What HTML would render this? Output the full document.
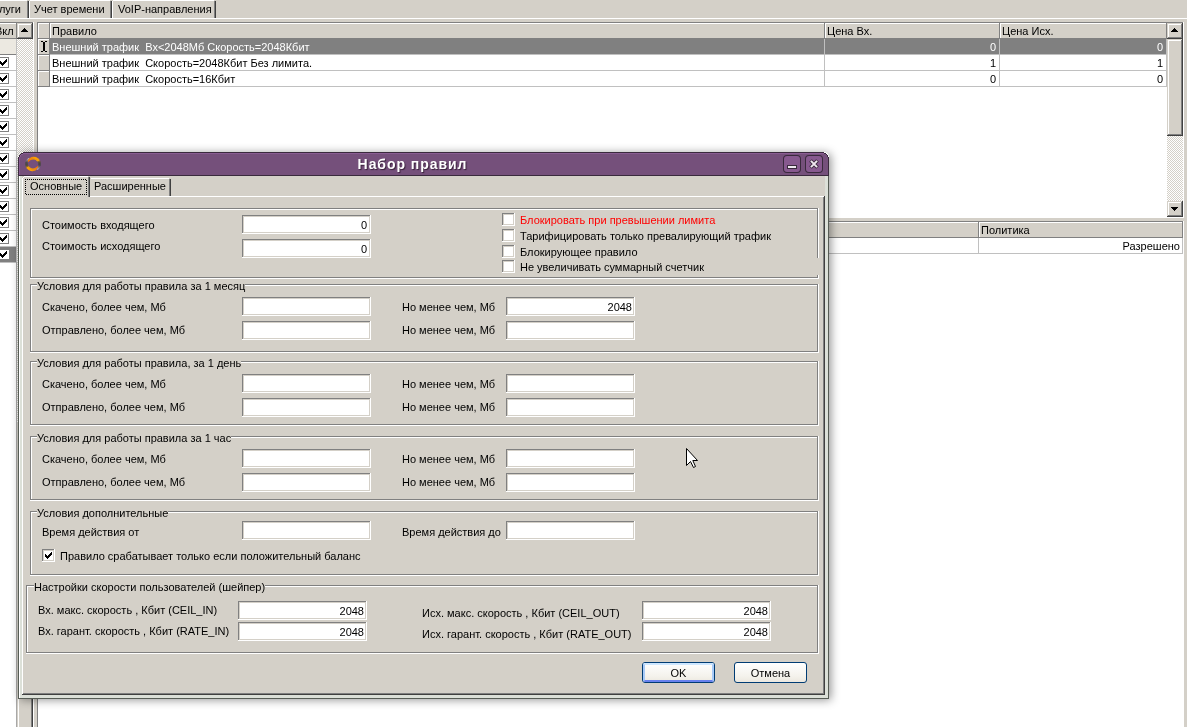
<!DOCTYPE html>
<html><head><meta charset="utf-8"><style>
html,body{margin:0;padding:0;width:1187px;height:727px;overflow:hidden;background:#fff;position:relative}
i{position:absolute;display:block}
s{position:absolute;display:block;font:11px/13px "Liberation Sans",sans-serif;white-space:nowrap;text-decoration:none;color:#000;will-change:transform}
svg{display:block}
</style></head><body>
<i style="left:0px;top:0px;width:1187px;height:22px;background:#d4d0c8;"></i><i style="left:0px;top:18px;width:1187px;height:1px;background:#ffffff;"></i><i style="left:0px;top:0px;width:27px;height:1px;background:#ffffff;"></i><i style="left:27px;top:1px;width:1px;height:17px;background:#808080;"></i><i style="left:28px;top:1px;width:1px;height:17px;background:#404040;"></i><s style="left:-279px;top:3px;width:300px;text-align:right;">Услуги</s><i style="left:30px;top:0px;width:80px;height:1px;background:#ffffff;"></i><i style="left:29px;top:1px;width:1px;height:17px;background:#ffffff;"></i><i style="left:110px;top:1px;width:1px;height:17px;background:#808080;"></i><i style="left:111px;top:1px;width:1px;height:17px;background:#404040;"></i><s style="left:34px;top:3px;">Учет времени</s><i style="left:113px;top:0px;width:101px;height:1px;background:#ffffff;"></i><i style="left:112px;top:1px;width:1px;height:17px;background:#ffffff;"></i><i style="left:214px;top:1px;width:1px;height:17px;background:#808080;"></i><i style="left:215px;top:1px;width:1px;height:17px;background:#404040;"></i><s style="left:118px;top:3px;">VoIP-направления</s><i style="left:1184px;top:22px;width:3px;height:705px;background:#d4d0c8;"></i><i style="left:0px;top:22px;width:37px;height:705px;background:#ffffff;"></i><i style="left:0px;top:22px;width:33px;height:1px;background:#808080;"></i><i style="left:0px;top:23px;width:16px;height:15px;background:#d4d0c8;"></i><i style="left:0px;top:23px;width:16px;height:1px;background:#ffffff;"></i><s style="left:-5px;top:25px;">Вкл</s><i style="left:16px;top:23px;width:1px;height:16px;background:#808080;"></i><i style="left:0px;top:38px;width:16px;height:1px;background:#808080;"></i><i style="left:0px;top:39px;width:16px;height:15px;background:#ece9e1;"></i><i style="left:0px;top:54px;width:16px;height:1px;background:#808080;"></i><i style="left:16px;top:39px;width:1px;height:16px;background:#808080;"></i><i style="left:-2px;top:57px;width:11px;height:1px;background:#808080;"></i><i style="left:-2px;top:67px;width:11px;height:1px;background:#808080;"></i><i style="left:8px;top:57px;width:1px;height:11px;background:#808080;"></i><svg style="position:absolute;left:0px;top:59px" width="7" height="7"><path d="M6 0h1v1h-1zM5 1h2v1h-2zM0 2h1v1h-1zM4 2h3v1h-3zM0 3h2v1h-2zM3 3h3v1h-3zM0 4h5v1h-5zM1 5h3v1h-3zM2 6h1v1h-1z" fill="#000"/></svg><i style="left:0px;top:70px;width:16px;height:1px;background:#c0c0c0;"></i><i style="left:-2px;top:73px;width:11px;height:1px;background:#808080;"></i><i style="left:-2px;top:83px;width:11px;height:1px;background:#808080;"></i><i style="left:8px;top:73px;width:1px;height:11px;background:#808080;"></i><svg style="position:absolute;left:0px;top:75px" width="7" height="7"><path d="M6 0h1v1h-1zM5 1h2v1h-2zM0 2h1v1h-1zM4 2h3v1h-3zM0 3h2v1h-2zM3 3h3v1h-3zM0 4h5v1h-5zM1 5h3v1h-3zM2 6h1v1h-1z" fill="#000"/></svg><i style="left:0px;top:86px;width:16px;height:1px;background:#c0c0c0;"></i><i style="left:-2px;top:89px;width:11px;height:1px;background:#808080;"></i><i style="left:-2px;top:99px;width:11px;height:1px;background:#808080;"></i><i style="left:8px;top:89px;width:1px;height:11px;background:#808080;"></i><svg style="position:absolute;left:0px;top:91px" width="7" height="7"><path d="M6 0h1v1h-1zM5 1h2v1h-2zM0 2h1v1h-1zM4 2h3v1h-3zM0 3h2v1h-2zM3 3h3v1h-3zM0 4h5v1h-5zM1 5h3v1h-3zM2 6h1v1h-1z" fill="#000"/></svg><i style="left:0px;top:102px;width:16px;height:1px;background:#c0c0c0;"></i><i style="left:-2px;top:105px;width:11px;height:1px;background:#808080;"></i><i style="left:-2px;top:115px;width:11px;height:1px;background:#808080;"></i><i style="left:8px;top:105px;width:1px;height:11px;background:#808080;"></i><svg style="position:absolute;left:0px;top:107px" width="7" height="7"><path d="M6 0h1v1h-1zM5 1h2v1h-2zM0 2h1v1h-1zM4 2h3v1h-3zM0 3h2v1h-2zM3 3h3v1h-3zM0 4h5v1h-5zM1 5h3v1h-3zM2 6h1v1h-1z" fill="#000"/></svg><i style="left:0px;top:118px;width:16px;height:1px;background:#c0c0c0;"></i><i style="left:-2px;top:121px;width:11px;height:1px;background:#808080;"></i><i style="left:-2px;top:131px;width:11px;height:1px;background:#808080;"></i><i style="left:8px;top:121px;width:1px;height:11px;background:#808080;"></i><svg style="position:absolute;left:0px;top:123px" width="7" height="7"><path d="M6 0h1v1h-1zM5 1h2v1h-2zM0 2h1v1h-1zM4 2h3v1h-3zM0 3h2v1h-2zM3 3h3v1h-3zM0 4h5v1h-5zM1 5h3v1h-3zM2 6h1v1h-1z" fill="#000"/></svg><i style="left:0px;top:134px;width:16px;height:1px;background:#c0c0c0;"></i><i style="left:-2px;top:137px;width:11px;height:1px;background:#808080;"></i><i style="left:-2px;top:147px;width:11px;height:1px;background:#808080;"></i><i style="left:8px;top:137px;width:1px;height:11px;background:#808080;"></i><svg style="position:absolute;left:0px;top:139px" width="7" height="7"><path d="M6 0h1v1h-1zM5 1h2v1h-2zM0 2h1v1h-1zM4 2h3v1h-3zM0 3h2v1h-2zM3 3h3v1h-3zM0 4h5v1h-5zM1 5h3v1h-3zM2 6h1v1h-1z" fill="#000"/></svg><i style="left:0px;top:150px;width:16px;height:1px;background:#c0c0c0;"></i><i style="left:-2px;top:153px;width:11px;height:1px;background:#808080;"></i><i style="left:-2px;top:163px;width:11px;height:1px;background:#808080;"></i><i style="left:8px;top:153px;width:1px;height:11px;background:#808080;"></i><svg style="position:absolute;left:0px;top:155px" width="7" height="7"><path d="M6 0h1v1h-1zM5 1h2v1h-2zM0 2h1v1h-1zM4 2h3v1h-3zM0 3h2v1h-2zM3 3h3v1h-3zM0 4h5v1h-5zM1 5h3v1h-3zM2 6h1v1h-1z" fill="#000"/></svg><i style="left:0px;top:166px;width:16px;height:1px;background:#c0c0c0;"></i><i style="left:-2px;top:169px;width:11px;height:1px;background:#808080;"></i><i style="left:-2px;top:179px;width:11px;height:1px;background:#808080;"></i><i style="left:8px;top:169px;width:1px;height:11px;background:#808080;"></i><svg style="position:absolute;left:0px;top:171px" width="7" height="7"><path d="M6 0h1v1h-1zM5 1h2v1h-2zM0 2h1v1h-1zM4 2h3v1h-3zM0 3h2v1h-2zM3 3h3v1h-3zM0 4h5v1h-5zM1 5h3v1h-3zM2 6h1v1h-1z" fill="#000"/></svg><i style="left:0px;top:182px;width:16px;height:1px;background:#c0c0c0;"></i><i style="left:-2px;top:185px;width:11px;height:1px;background:#808080;"></i><i style="left:-2px;top:195px;width:11px;height:1px;background:#808080;"></i><i style="left:8px;top:185px;width:1px;height:11px;background:#808080;"></i><svg style="position:absolute;left:0px;top:187px" width="7" height="7"><path d="M6 0h1v1h-1zM5 1h2v1h-2zM0 2h1v1h-1zM4 2h3v1h-3zM0 3h2v1h-2zM3 3h3v1h-3zM0 4h5v1h-5zM1 5h3v1h-3zM2 6h1v1h-1z" fill="#000"/></svg><i style="left:0px;top:198px;width:16px;height:1px;background:#c0c0c0;"></i><i style="left:-2px;top:201px;width:11px;height:1px;background:#808080;"></i><i style="left:-2px;top:211px;width:11px;height:1px;background:#808080;"></i><i style="left:8px;top:201px;width:1px;height:11px;background:#808080;"></i><svg style="position:absolute;left:0px;top:203px" width="7" height="7"><path d="M6 0h1v1h-1zM5 1h2v1h-2zM0 2h1v1h-1zM4 2h3v1h-3zM0 3h2v1h-2zM3 3h3v1h-3zM0 4h5v1h-5zM1 5h3v1h-3zM2 6h1v1h-1z" fill="#000"/></svg><i style="left:0px;top:214px;width:16px;height:1px;background:#c0c0c0;"></i><i style="left:-2px;top:217px;width:11px;height:1px;background:#808080;"></i><i style="left:-2px;top:227px;width:11px;height:1px;background:#808080;"></i><i style="left:8px;top:217px;width:1px;height:11px;background:#808080;"></i><svg style="position:absolute;left:0px;top:219px" width="7" height="7"><path d="M6 0h1v1h-1zM5 1h2v1h-2zM0 2h1v1h-1zM4 2h3v1h-3zM0 3h2v1h-2zM3 3h3v1h-3zM0 4h5v1h-5zM1 5h3v1h-3zM2 6h1v1h-1z" fill="#000"/></svg><i style="left:0px;top:230px;width:16px;height:1px;background:#c0c0c0;"></i><i style="left:-2px;top:233px;width:11px;height:1px;background:#808080;"></i><i style="left:-2px;top:243px;width:11px;height:1px;background:#808080;"></i><i style="left:8px;top:233px;width:1px;height:11px;background:#808080;"></i><svg style="position:absolute;left:0px;top:235px" width="7" height="7"><path d="M6 0h1v1h-1zM5 1h2v1h-2zM0 2h1v1h-1zM4 2h3v1h-3zM0 3h2v1h-2zM3 3h3v1h-3zM0 4h5v1h-5zM1 5h3v1h-3zM2 6h1v1h-1z" fill="#000"/></svg><i style="left:0px;top:246px;width:16px;height:1px;background:#c0c0c0;"></i><i style="left:0px;top:247px;width:16px;height:15px;background:#808080;"></i><i style="left:-1px;top:250px;width:10px;height:9px;background:#ffffff;"></i><svg style="position:absolute;left:0px;top:251px" width="7" height="7"><path d="M6 0h1v1h-1zM5 1h2v1h-2zM0 2h1v1h-1zM4 2h3v1h-3zM0 3h2v1h-2zM3 3h3v1h-3zM0 4h5v1h-5zM1 5h3v1h-3zM2 6h1v1h-1z" fill="#000"/></svg><i style="left:0px;top:262px;width:16px;height:1px;background:#c0c0c0;"></i><i style="left:16px;top:39px;width:1px;height:223px;background:#c0c0c0;"></i><i style="left:17px;top:23px;width:16px;height:16px;background:#d4d0c8;"></i><i style="left:17px;top:23px;width:16px;height:1px;background:#d4d0c8;"></i><i style="left:17px;top:23px;width:1px;height:16px;background:#d4d0c8;"></i><i style="left:17px;top:38px;width:16px;height:1px;background:#404040;"></i><i style="left:32px;top:23px;width:1px;height:16px;background:#404040;"></i><i style="left:18px;top:24px;width:14px;height:1px;background:#ffffff;"></i><i style="left:18px;top:24px;width:1px;height:14px;background:#ffffff;"></i><i style="left:18px;top:37px;width:14px;height:1px;background:#808080;"></i><i style="left:31px;top:24px;width:1px;height:14px;background:#808080;"></i><svg style="position:absolute;left:21px;top:28px" width="7" height="4"><path d="M3 0h1v1h1v1h1v1h1v1h-7v-1h1v-1h1v-1h1z" fill="#000"/></svg><i style="left:17px;top:39px;width:16px;height:384px;background-color:#fff;background-image:repeating-conic-gradient(#d4d0c8 0 25%,#fff 0 50%);background-size:2px 2px"></i><i style="left:17px;top:423px;width:16px;height:275px;background:#d4d0c8;"></i><i style="left:16px;top:262px;width:1px;height:436px;background:#a8a8a8;"></i><i style="left:33px;top:22px;width:1px;height:705px;background:#ffffff;"></i><i style="left:34px;top:22px;width:3px;height:705px;background:#d4d0c8;"></i><i style="left:16px;top:698px;width:17px;height:29px;background:#d4d0c8;"></i><i style="left:16px;top:698px;width:1px;height:29px;background:#a8a8a8;"></i><i style="left:17px;top:698px;width:1px;height:29px;background:#d4d0c8;"></i><i style="left:18px;top:698px;width:1px;height:29px;background:#ffffff;"></i><i style="left:32px;top:698px;width:1px;height:29px;background:#404040;"></i><i style="left:31px;top:698px;width:1px;height:29px;background:#808080;"></i><i style="left:37px;top:22px;width:1147px;height:196px;background:#ffffff;"></i><i style="left:37px;top:22px;width:1146px;height:1px;background:#808080;"></i><i style="left:37px;top:22px;width:1px;height:196px;background:#808080;"></i><i style="left:1183px;top:22px;width:1px;height:196px;background:#ffffff;"></i><i style="left:37px;top:217px;width:1147px;height:1px;background:#ffffff;"></i><i style="left:38px;top:23px;width:11px;height:15px;background:#d4d0c8;"></i><i style="left:38px;top:23px;width:11px;height:1px;background:#ffffff;"></i><i style="left:38px;top:23px;width:1px;height:15px;background:#ffffff;"></i><i style="left:49px;top:23px;width:1px;height:16px;background:#808080;"></i><i style="left:38px;top:38px;width:11px;height:1px;background:#808080;"></i><i style="left:38px;top:39px;width:11px;height:15px;background:#d4d0c8;"></i><i style="left:38px;top:39px;width:11px;height:1px;background:#ffffff;"></i><i style="left:38px;top:39px;width:1px;height:15px;background:#ffffff;"></i><i style="left:49px;top:39px;width:1px;height:16px;background:#808080;"></i><i style="left:38px;top:54px;width:12px;height:1px;background:#808080;"></i><i style="left:38px;top:55px;width:11px;height:15px;background:#d4d0c8;"></i><i style="left:38px;top:55px;width:11px;height:1px;background:#ffffff;"></i><i style="left:38px;top:55px;width:1px;height:15px;background:#ffffff;"></i><i style="left:49px;top:55px;width:1px;height:16px;background:#808080;"></i><i style="left:38px;top:70px;width:12px;height:1px;background:#808080;"></i><i style="left:38px;top:71px;width:11px;height:15px;background:#d4d0c8;"></i><i style="left:38px;top:71px;width:11px;height:1px;background:#ffffff;"></i><i style="left:38px;top:71px;width:1px;height:15px;background:#ffffff;"></i><i style="left:49px;top:71px;width:1px;height:16px;background:#808080;"></i><i style="left:38px;top:86px;width:12px;height:1px;background:#808080;"></i><i style="left:41px;top:41px;width:2px;height:1px;background:#000;"></i><i style="left:45px;top:41px;width:2px;height:1px;background:#000;"></i><i style="left:43px;top:42px;width:2px;height:9px;background:#000;"></i><i style="left:41px;top:51px;width:2px;height:1px;background:#000;"></i><i style="left:45px;top:51px;width:2px;height:1px;background:#000;"></i><i style="left:50px;top:23px;width:774px;height:15px;background:#d4d0c8;"></i><i style="left:50px;top:23px;width:774px;height:1px;background:#ffffff;"></i><i style="left:50px;top:23px;width:1px;height:15px;background:#ffffff;"></i><i style="left:824px;top:23px;width:1px;height:16px;background:#808080;"></i><s style="left:52px;top:25px;">Правило</s><i style="left:825px;top:23px;width:174px;height:15px;background:#d4d0c8;"></i><i style="left:825px;top:23px;width:174px;height:1px;background:#ffffff;"></i><i style="left:825px;top:23px;width:1px;height:15px;background:#ffffff;"></i><i style="left:999px;top:23px;width:1px;height:16px;background:#808080;"></i><s style="left:827px;top:25px;">Цена Вх.</s><i style="left:1000px;top:23px;width:166px;height:15px;background:#d4d0c8;"></i><i style="left:1000px;top:23px;width:166px;height:1px;background:#ffffff;"></i><i style="left:1000px;top:23px;width:1px;height:15px;background:#ffffff;"></i><i style="left:1166px;top:23px;width:1px;height:16px;background:#808080;"></i><s style="left:1002px;top:25px;">Цена Исх.</s><i style="left:50px;top:38px;width:1117px;height:1px;background:#808080;"></i><i style="left:50px;top:38px;width:1116px;height:16px;background:#808080;"></i><i style="left:50px;top:54px;width:1117px;height:1px;background:#c0c0c0;"></i><i style="left:824px;top:39px;width:1px;height:16px;background:#c0c0c0;"></i><i style="left:999px;top:39px;width:1px;height:16px;background:#c0c0c0;"></i><i style="left:1166px;top:39px;width:1px;height:16px;background:#c0c0c0;"></i><s style="left:52px;top:41px;color:#ffffff;">Внешний трафик&nbsp; Вх&lt;2048Мб Скорость=2048Кбит</s><s style="left:696px;top:41px;width:300px;text-align:right;color:#ffffff;">0</s><s style="left:863px;top:41px;width:300px;text-align:right;color:#ffffff;">0</s><i style="left:50px;top:70px;width:1117px;height:1px;background:#c0c0c0;"></i><i style="left:824px;top:55px;width:1px;height:16px;background:#c0c0c0;"></i><i style="left:999px;top:55px;width:1px;height:16px;background:#c0c0c0;"></i><i style="left:1166px;top:55px;width:1px;height:16px;background:#c0c0c0;"></i><s style="left:52px;top:57px;">Внешний трафик&nbsp; Скорость=2048Кбит Без лимита.</s><s style="left:696px;top:57px;width:300px;text-align:right;">1</s><s style="left:863px;top:57px;width:300px;text-align:right;">1</s><i style="left:50px;top:86px;width:1117px;height:1px;background:#c0c0c0;"></i><i style="left:824px;top:71px;width:1px;height:16px;background:#c0c0c0;"></i><i style="left:999px;top:71px;width:1px;height:16px;background:#c0c0c0;"></i><i style="left:1166px;top:71px;width:1px;height:16px;background:#c0c0c0;"></i><s style="left:52px;top:73px;">Внешний трафик&nbsp; Скорость=16Кбит</s><s style="left:696px;top:73px;width:300px;text-align:right;">0</s><s style="left:863px;top:73px;width:300px;text-align:right;">0</s><i style="left:1167px;top:23px;width:16px;height:16px;background:#d4d0c8;"></i><i style="left:1167px;top:23px;width:16px;height:1px;background:#d4d0c8;"></i><i style="left:1167px;top:23px;width:1px;height:16px;background:#d4d0c8;"></i><i style="left:1167px;top:38px;width:16px;height:1px;background:#404040;"></i><i style="left:1182px;top:23px;width:1px;height:16px;background:#404040;"></i><i style="left:1168px;top:24px;width:14px;height:1px;background:#ffffff;"></i><i style="left:1168px;top:24px;width:1px;height:14px;background:#ffffff;"></i><i style="left:1168px;top:37px;width:14px;height:1px;background:#808080;"></i><i style="left:1181px;top:24px;width:1px;height:14px;background:#808080;"></i><svg style="position:absolute;left:1171px;top:28px" width="7" height="4"><path d="M3 0h1v1h1v1h1v1h1v1h-7v-1h1v-1h1v-1h1z" fill="#000"/></svg><i style="left:1167px;top:39px;width:16px;height:97px;background:#d4d0c8;"></i><i style="left:1167px;top:39px;width:16px;height:1px;background:#d4d0c8;"></i><i style="left:1167px;top:39px;width:1px;height:97px;background:#d4d0c8;"></i><i style="left:1167px;top:135px;width:16px;height:1px;background:#404040;"></i><i style="left:1182px;top:39px;width:1px;height:97px;background:#404040;"></i><i style="left:1168px;top:40px;width:14px;height:1px;background:#ffffff;"></i><i style="left:1168px;top:40px;width:1px;height:95px;background:#ffffff;"></i><i style="left:1168px;top:134px;width:14px;height:1px;background:#808080;"></i><i style="left:1181px;top:40px;width:1px;height:95px;background:#808080;"></i><i style="left:1167px;top:136px;width:16px;height:65px;background-color:#fff;background-image:repeating-conic-gradient(#d4d0c8 0 25%,#fff 0 50%);background-size:2px 2px"></i><i style="left:1167px;top:201px;width:16px;height:16px;background:#d4d0c8;"></i><i style="left:1167px;top:201px;width:16px;height:1px;background:#d4d0c8;"></i><i style="left:1167px;top:201px;width:1px;height:16px;background:#d4d0c8;"></i><i style="left:1167px;top:216px;width:16px;height:1px;background:#404040;"></i><i style="left:1182px;top:201px;width:1px;height:16px;background:#404040;"></i><i style="left:1168px;top:202px;width:14px;height:1px;background:#ffffff;"></i><i style="left:1168px;top:202px;width:1px;height:14px;background:#ffffff;"></i><i style="left:1168px;top:215px;width:14px;height:1px;background:#808080;"></i><i style="left:1181px;top:202px;width:1px;height:14px;background:#808080;"></i><svg style="position:absolute;left:1171px;top:207px" width="7" height="4"><path d="M0 0h7v1h-1v1h-1v1h-1v1h-1v-1h-1v-1h-1v-1h-1z" fill="#000"/></svg><i style="left:37px;top:218px;width:1147px;height:3px;background:#d4d0c8;"></i><i style="left:37px;top:221px;width:1147px;height:506px;background:#ffffff;"></i><i style="left:37px;top:221px;width:1146px;height:1px;background:#808080;"></i><i style="left:1183px;top:221px;width:1px;height:506px;background:#ffffff;"></i><i style="left:38px;top:222px;width:940px;height:15px;background:#d4d0c8;"></i><i style="left:38px;top:222px;width:940px;height:1px;background:#ffffff;"></i><i style="left:978px;top:222px;width:1px;height:16px;background:#808080;"></i><i style="left:979px;top:222px;width:204px;height:15px;background:#d4d0c8;"></i><i style="left:979px;top:222px;width:204px;height:1px;background:#ffffff;"></i><i style="left:979px;top:222px;width:1px;height:15px;background:#ffffff;"></i><i style="left:1182px;top:222px;width:1px;height:16px;background:#808080;"></i><i style="left:38px;top:237px;width:1145px;height:1px;background:#808080;"></i><s style="left:981px;top:224px;">Политика</s><i style="left:978px;top:238px;width:1px;height:16px;background:#c0c0c0;"></i><i style="left:1182px;top:238px;width:1px;height:16px;background:#c0c0c0;"></i><i style="left:38px;top:253px;width:1145px;height:1px;background:#c0c0c0;"></i><s style="left:880px;top:240px;width:300px;text-align:right;">Разрешено</s><i style="left:37px;top:221px;width:1px;height:506px;background:#808080;"></i>
<div id="dlg" style="position:absolute;left:18px;top:152px;width:811px;height:547px;border-radius:5px 5px 0 0;box-shadow:2px 1px 10px rgba(0,0,0,.42)"></div><i style="left:18px;top:176px;width:811px;height:523px;background:#565c54;"></i><i style="left:19px;top:176px;width:809px;height:522px;background:#dce0d8;"></i><i style="left:19px;top:176px;width:1px;height:522px;background:#ffffff;"></i><i style="left:23px;top:152px;width:801px;height:1px;background:#3a2a3d;"></i><i style="left:21px;top:153px;width:805px;height:1px;background:#3a2a3d;"></i><i style="left:20px;top:154px;width:807px;height:1px;background:#3a2a3d;"></i><i style="left:19px;top:155px;width:809px;height:2px;background:#3a2a3d;"></i><i style="left:18px;top:157px;width:811px;height:19px;background:#3a2a3d;"></i><i style="left:21px;top:154px;width:805px;height:1px;background:#75507b;"></i><i style="left:20px;top:155px;width:807px;height:2px;background:#75507b;"></i><i style="left:19px;top:157px;width:809px;height:18px;background:#75507b;"></i><i style="left:23px;top:153px;width:801px;height:1px;background:#8a5d93;"></i><i style="left:21px;top:154px;width:2px;height:1px;background:#8a5d93;"></i><i style="left:20px;top:155px;width:1px;height:2px;background:#8a5d93;"></i><i style="left:19px;top:157px;width:1px;height:18px;background:#8a5d93;"></i><s style="left:295px;top:156px;width:235px;text-align:center;color:#fff;font:bold 14px/17px 'Liberation Sans';letter-spacing:0.95px;text-shadow:1px 1px 1px rgba(40,20,40,.8)">Набор правил</s><svg style="position:absolute;left:25px;top:156px" width="16" height="16" viewBox="0 0 16 16"><path d="M4.21 1.80 L2.69 2.58 L3.66 3.56 L4.47 2.23Z" fill="#b9b9c2"/><path d="M2.91 2.40 L1.69 3.62 L3.14 4.61 L3.79 3.35Z" fill="#9b9ba2"/><path d="M1.87 3.40 L0.94 4.87 L2.82 5.68 L3.23 4.40Z" fill="#7e7e82"/><path d="M1.07 4.60 L0.45 6.25 L2.68 6.75 L2.87 5.47Z" fill="#606062"/><path d="M0.53 5.96 L0.25 7.70 L2.74 7.78 L2.70 6.54Z" fill="#464645"/><path d="M0.27 7.41 L0.35 9.16 L2.96 8.75 L2.71 7.58Z" fill="#4d4942"/><path d="M0.31 8.87 L0.74 10.58 L3.34 9.64 L2.90 8.56Z" fill="#554d3e"/><path d="M0.64 10.30 L1.40 11.88 L3.85 10.43 L3.25 9.47Z" fill="#83662c"/><path d="M1.25 11.63 L2.30 13.01 L4.47 11.10 L3.73 10.28Z" fill="#ffa900"/><path d="M2.10 12.80 L3.40 13.94 L5.18 11.65 L4.34 10.98Z" fill="#ffa600"/><path d="M3.16 13.77 L4.65 14.62 L5.95 12.06 L5.03 11.55Z" fill="#ffa300"/><path d="M4.39 14.50 L5.99 15.03 L6.78 12.32 L5.79 11.99Z" fill="#ffa000"/><path d="M5.72 14.97 L7.36 15.15 L7.62 12.45 L6.61 12.28Z" fill="#ff9d00"/><path d="M7.09 15.15 L8.71 15.00 L8.47 12.43 L7.45 12.44Z" fill="#ff9a00"/><path d="M8.45 15.06 L9.97 14.59 L9.30 12.27 L8.30 12.45Z" fill="#ff9700"/><path d="M9.73 14.69 L11.10 13.94 L10.10 11.98 L9.14 12.32Z" fill="#ff9200"/><path d="M10.89 14.09 L12.03 13.09 L10.85 11.56 L9.94 12.05Z" fill="#ff8a00"/><path d="M11.86 13.28 L12.74 12.09 L11.53 11.02 L10.70 11.66Z" fill="#ff8200"/><path d="M12.62 12.30 L13.18 10.99 L12.16 10.38 L11.40 11.14Z" fill="#ff7a00"/><path d="M13.12 11.22 L13.20 10.03 L12.73 9.84 L12.03 10.52Z" fill="#ff7200"/><path d="M11.89 14.10 L13.41 13.32 L12.44 12.34 L11.63 13.67Z" fill="#b9b9c2"/><path d="M13.19 13.50 L14.41 12.28 L12.96 11.29 L12.31 12.55Z" fill="#9b9ba2"/><path d="M14.23 12.50 L15.16 11.03 L13.28 10.22 L12.87 11.50Z" fill="#7e7e82"/><path d="M15.03 11.30 L15.65 9.65 L13.42 9.15 L13.23 10.43Z" fill="#606062"/><path d="M15.57 9.94 L15.85 8.20 L13.36 8.12 L13.40 9.36Z" fill="#464645"/><path d="M15.83 8.49 L15.75 6.74 L13.14 7.15 L13.39 8.32Z" fill="#4d4942"/><path d="M15.79 7.03 L15.36 5.32 L12.76 6.26 L13.20 7.34Z" fill="#554d3e"/><path d="M15.46 5.60 L14.70 4.02 L12.25 5.47 L12.85 6.43Z" fill="#83662c"/><path d="M14.85 4.27 L13.80 2.89 L11.63 4.80 L12.37 5.62Z" fill="#ffa900"/><path d="M14.00 3.10 L12.70 1.96 L10.92 4.25 L11.76 4.92Z" fill="#ffa600"/><path d="M12.94 2.13 L11.45 1.28 L10.15 3.84 L11.07 4.35Z" fill="#ffa300"/><path d="M11.71 1.40 L10.11 0.87 L9.32 3.58 L10.31 3.91Z" fill="#ffa000"/><path d="M10.38 0.93 L8.74 0.75 L8.48 3.45 L9.49 3.62Z" fill="#ff9d00"/><path d="M9.01 0.75 L7.39 0.90 L7.63 3.47 L8.65 3.46Z" fill="#ff9a00"/><path d="M7.65 0.84 L6.13 1.31 L6.80 3.63 L7.80 3.45Z" fill="#ff9700"/><path d="M6.37 1.21 L5.00 1.96 L6.00 3.92 L6.96 3.58Z" fill="#ff9200"/><path d="M5.21 1.81 L4.07 2.81 L5.25 4.34 L6.16 3.85Z" fill="#ff8a00"/><path d="M4.24 2.62 L3.36 3.81 L4.57 4.88 L5.40 4.24Z" fill="#ff8200"/><path d="M3.48 3.60 L2.92 4.91 L3.94 5.52 L4.70 4.76Z" fill="#ff7a00"/><path d="M2.98 4.68 L2.90 5.87 L3.37 6.06 L4.07 5.38Z" fill="#ff7200"/></svg><i style="left:783px;top:155px;width:18px;height:18px;background:#3a2a3d;border-radius:4px"></i><i style="left:784px;top:156px;width:16px;height:16px;background:#87598f;border-radius:3px"></i><i style="left:787px;top:165px;width:10px;height:4px;background:#3a2a3d;"></i><i style="left:788px;top:166px;width:8px;height:2px;background:#f0e8f0;"></i><i style="left:805px;top:155px;width:18px;height:18px;background:#3a2a3d;border-radius:4px"></i><i style="left:806px;top:156px;width:16px;height:16px;background:#87598f;border-radius:3px"></i><svg style="position:absolute;left:808px;top:158px" width="12" height="12"><path d="M2.5 2.5L9.5 9.5M9.5 2.5L2.5 9.5" stroke="#3a2a3d" stroke-width="3.8"/><path d="M2.9 2.9L9.1 9.1M9.1 2.9L2.9 9.1" stroke="#f0e8f0" stroke-width="2"/></svg><i style="left:22px;top:176px;width:803px;height:519px;background:#d4d0c8;"></i><i style="left:89px;top:196px;width:735px;height:1px;background:#ffffff;"></i><i style="left:22px;top:196px;width:1px;height:498px;background:#ffffff;"></i><i style="left:823px;top:197px;width:1px;height:497px;background:#808080;"></i><i style="left:824px;top:196px;width:1px;height:499px;background:#404040;"></i><i style="left:23px;top:693px;width:801px;height:1px;background:#808080;"></i><i style="left:22px;top:694px;width:803px;height:1px;background:#404040;"></i><i style="left:24px;top:176px;width:64px;height:1px;background:#ffffff;"></i><i style="left:22px;top:178px;width:1px;height:19px;background:#ffffff;"></i><i style="left:23px;top:177px;width:1px;height:1px;background:#ffffff;"></i><i style="left:88px;top:177px;width:1px;height:20px;background:#808080;"></i><i style="left:89px;top:177px;width:1px;height:20px;background:#404040;"></i><s style="left:30px;top:180px;">Основные</s><i style="left:25px;top:179px;width:61px;height:1px;background:repeating-linear-gradient(90deg,#000 0 1px,transparent 1px 2px);"></i><i style="left:26px;top:194px;width:61px;height:1px;background:repeating-linear-gradient(90deg,#000 0 1px,transparent 1px 2px);"></i><i style="left:25px;top:179px;width:1px;height:15px;background:repeating-linear-gradient(180deg,#000 0 1px,transparent 1px 2px);"></i><i style="left:86px;top:180px;width:1px;height:15px;background:repeating-linear-gradient(180deg,#000 0 1px,transparent 1px 2px);"></i><i style="left:91px;top:178px;width:78px;height:1px;background:#ffffff;"></i><i style="left:169px;top:179px;width:1px;height:17px;background:#808080;"></i><i style="left:170px;top:179px;width:1px;height:17px;background:#404040;"></i><s style="left:94px;top:180px;">Расширенные</s><i style="left:30px;top:208px;width:788px;height:1px;background:#808080;"></i><i style="left:31px;top:209px;width:787px;height:1px;background:#ffffff;"></i><i style="left:30px;top:208px;width:1px;height:70px;background:#808080;"></i><i style="left:31px;top:209px;width:1px;height:69px;background:#ffffff;"></i><i style="left:30px;top:277px;width:788px;height:1px;background:#808080;"></i><i style="left:30px;top:278px;width:789px;height:1px;background:#ffffff;"></i><i style="left:817px;top:208px;width:1px;height:70px;background:#808080;"></i><i style="left:818px;top:208px;width:1px;height:71px;background:#ffffff;"></i><s style="left:42px;top:219px;">Стоимость входящего</s><s style="left:42px;top:240px;">Стоимость исходящего</s><i style="left:242px;top:215px;width:129px;height:19px;background:#ffffff;"></i><i style="left:242px;top:215px;width:128px;height:1px;background:#808080;"></i><i style="left:242px;top:215px;width:1px;height:18px;background:#808080;"></i><i style="left:243px;top:216px;width:126px;height:1px;background:#d4d0c8;"></i><i style="left:243px;top:216px;width:1px;height:16px;background:#d4d0c8;"></i><i style="left:243px;top:232px;width:127px;height:1px;background:#d4d0c8;"></i><i style="left:369px;top:216px;width:1px;height:17px;background:#d4d0c8;"></i><s style="left:67px;top:219px;width:300px;text-align:right;">0</s><i style="left:242px;top:239px;width:129px;height:19px;background:#ffffff;"></i><i style="left:242px;top:239px;width:128px;height:1px;background:#808080;"></i><i style="left:242px;top:239px;width:1px;height:18px;background:#808080;"></i><i style="left:243px;top:240px;width:126px;height:1px;background:#d4d0c8;"></i><i style="left:243px;top:240px;width:1px;height:16px;background:#d4d0c8;"></i><i style="left:243px;top:256px;width:127px;height:1px;background:#d4d0c8;"></i><i style="left:369px;top:240px;width:1px;height:17px;background:#d4d0c8;"></i><s style="left:67px;top:243px;width:300px;text-align:right;">0</s><i style="left:500px;top:258px;width:320px;height:17px;background:#d4d0c8;"></i><i style="left:502px;top:213px;width:13px;height:13px;background:#ffffff;"></i><i style="left:502px;top:213px;width:12px;height:1px;background:#808080;"></i><i style="left:502px;top:213px;width:1px;height:12px;background:#808080;"></i><i style="left:503px;top:214px;width:10px;height:1px;background:#d4d0c8;"></i><i style="left:503px;top:214px;width:1px;height:10px;background:#d4d0c8;"></i><i style="left:503px;top:224px;width:11px;height:1px;background:#d4d0c8;"></i><i style="left:513px;top:214px;width:1px;height:11px;background:#d4d0c8;"></i><s style="left:520px;top:214px;color:#ff0000;">Блокировать при превышении лимита</s><i style="left:502px;top:229px;width:13px;height:13px;background:#ffffff;"></i><i style="left:502px;top:229px;width:12px;height:1px;background:#808080;"></i><i style="left:502px;top:229px;width:1px;height:12px;background:#808080;"></i><i style="left:503px;top:230px;width:10px;height:1px;background:#d4d0c8;"></i><i style="left:503px;top:230px;width:1px;height:10px;background:#d4d0c8;"></i><i style="left:503px;top:240px;width:11px;height:1px;background:#d4d0c8;"></i><i style="left:513px;top:230px;width:1px;height:11px;background:#d4d0c8;"></i><s style="left:520px;top:230px;">Тарифицировать только превалирующий трафик</s><i style="left:502px;top:245px;width:13px;height:13px;background:#ffffff;"></i><i style="left:502px;top:245px;width:12px;height:1px;background:#808080;"></i><i style="left:502px;top:245px;width:1px;height:12px;background:#808080;"></i><i style="left:503px;top:246px;width:10px;height:1px;background:#d4d0c8;"></i><i style="left:503px;top:246px;width:1px;height:10px;background:#d4d0c8;"></i><i style="left:503px;top:256px;width:11px;height:1px;background:#d4d0c8;"></i><i style="left:513px;top:246px;width:1px;height:11px;background:#d4d0c8;"></i><s style="left:520px;top:246px;">Блокирующее правило</s><i style="left:502px;top:260px;width:13px;height:13px;background:#ffffff;"></i><i style="left:502px;top:260px;width:12px;height:1px;background:#808080;"></i><i style="left:502px;top:260px;width:1px;height:12px;background:#808080;"></i><i style="left:503px;top:261px;width:10px;height:1px;background:#d4d0c8;"></i><i style="left:503px;top:261px;width:1px;height:10px;background:#d4d0c8;"></i><i style="left:503px;top:271px;width:11px;height:1px;background:#d4d0c8;"></i><i style="left:513px;top:261px;width:1px;height:11px;background:#d4d0c8;"></i><s style="left:520px;top:261px;">Не увеличивать суммарный счетчик</s><i style="left:30px;top:284px;width:788px;height:1px;background:#808080;"></i><i style="left:31px;top:285px;width:787px;height:1px;background:#ffffff;"></i><i style="left:30px;top:284px;width:1px;height:68px;background:#808080;"></i><i style="left:31px;top:285px;width:1px;height:67px;background:#ffffff;"></i><i style="left:30px;top:351px;width:788px;height:1px;background:#808080;"></i><i style="left:30px;top:352px;width:789px;height:1px;background:#ffffff;"></i><i style="left:817px;top:284px;width:1px;height:68px;background:#808080;"></i><i style="left:818px;top:284px;width:1px;height:69px;background:#ffffff;"></i><s style="left:37px;top:280px;background:#d4d0c8">Условия для работы правила за 1 месяц</s><i style="left:242px;top:297px;width:129px;height:19px;background:#ffffff;"></i><i style="left:242px;top:297px;width:128px;height:1px;background:#808080;"></i><i style="left:242px;top:297px;width:1px;height:18px;background:#808080;"></i><i style="left:243px;top:298px;width:126px;height:1px;background:#d4d0c8;"></i><i style="left:243px;top:298px;width:1px;height:16px;background:#d4d0c8;"></i><i style="left:243px;top:314px;width:127px;height:1px;background:#d4d0c8;"></i><i style="left:369px;top:298px;width:1px;height:17px;background:#d4d0c8;"></i><i style="left:242px;top:321px;width:129px;height:19px;background:#ffffff;"></i><i style="left:242px;top:321px;width:128px;height:1px;background:#808080;"></i><i style="left:242px;top:321px;width:1px;height:18px;background:#808080;"></i><i style="left:243px;top:322px;width:126px;height:1px;background:#d4d0c8;"></i><i style="left:243px;top:322px;width:1px;height:16px;background:#d4d0c8;"></i><i style="left:243px;top:338px;width:127px;height:1px;background:#d4d0c8;"></i><i style="left:369px;top:322px;width:1px;height:17px;background:#d4d0c8;"></i><i style="left:506px;top:297px;width:129px;height:19px;background:#ffffff;"></i><i style="left:506px;top:297px;width:128px;height:1px;background:#808080;"></i><i style="left:506px;top:297px;width:1px;height:18px;background:#808080;"></i><i style="left:507px;top:298px;width:126px;height:1px;background:#d4d0c8;"></i><i style="left:507px;top:298px;width:1px;height:16px;background:#d4d0c8;"></i><i style="left:507px;top:314px;width:127px;height:1px;background:#d4d0c8;"></i><i style="left:633px;top:298px;width:1px;height:17px;background:#d4d0c8;"></i><i style="left:506px;top:321px;width:129px;height:19px;background:#ffffff;"></i><i style="left:506px;top:321px;width:128px;height:1px;background:#808080;"></i><i style="left:506px;top:321px;width:1px;height:18px;background:#808080;"></i><i style="left:507px;top:322px;width:126px;height:1px;background:#d4d0c8;"></i><i style="left:507px;top:322px;width:1px;height:16px;background:#d4d0c8;"></i><i style="left:507px;top:338px;width:127px;height:1px;background:#d4d0c8;"></i><i style="left:633px;top:322px;width:1px;height:17px;background:#d4d0c8;"></i><s style="left:42px;top:301px;">Скачено, более чем, Мб</s><s style="left:42px;top:324px;">Отправлено, более чем, Мб</s><s style="left:402px;top:301px;">Но менее чем, Мб</s><s style="left:402px;top:324px;">Но менее чем, Мб</s><i style="left:30px;top:361px;width:788px;height:1px;background:#808080;"></i><i style="left:31px;top:362px;width:787px;height:1px;background:#ffffff;"></i><i style="left:30px;top:361px;width:1px;height:64px;background:#808080;"></i><i style="left:31px;top:362px;width:1px;height:63px;background:#ffffff;"></i><i style="left:30px;top:424px;width:788px;height:1px;background:#808080;"></i><i style="left:30px;top:425px;width:789px;height:1px;background:#ffffff;"></i><i style="left:817px;top:361px;width:1px;height:64px;background:#808080;"></i><i style="left:818px;top:361px;width:1px;height:65px;background:#ffffff;"></i><s style="left:37px;top:357px;background:#d4d0c8">Условия для работы правила, за 1 день</s><i style="left:242px;top:374px;width:129px;height:19px;background:#ffffff;"></i><i style="left:242px;top:374px;width:128px;height:1px;background:#808080;"></i><i style="left:242px;top:374px;width:1px;height:18px;background:#808080;"></i><i style="left:243px;top:375px;width:126px;height:1px;background:#d4d0c8;"></i><i style="left:243px;top:375px;width:1px;height:16px;background:#d4d0c8;"></i><i style="left:243px;top:391px;width:127px;height:1px;background:#d4d0c8;"></i><i style="left:369px;top:375px;width:1px;height:17px;background:#d4d0c8;"></i><i style="left:242px;top:398px;width:129px;height:19px;background:#ffffff;"></i><i style="left:242px;top:398px;width:128px;height:1px;background:#808080;"></i><i style="left:242px;top:398px;width:1px;height:18px;background:#808080;"></i><i style="left:243px;top:399px;width:126px;height:1px;background:#d4d0c8;"></i><i style="left:243px;top:399px;width:1px;height:16px;background:#d4d0c8;"></i><i style="left:243px;top:415px;width:127px;height:1px;background:#d4d0c8;"></i><i style="left:369px;top:399px;width:1px;height:17px;background:#d4d0c8;"></i><i style="left:506px;top:374px;width:129px;height:19px;background:#ffffff;"></i><i style="left:506px;top:374px;width:128px;height:1px;background:#808080;"></i><i style="left:506px;top:374px;width:1px;height:18px;background:#808080;"></i><i style="left:507px;top:375px;width:126px;height:1px;background:#d4d0c8;"></i><i style="left:507px;top:375px;width:1px;height:16px;background:#d4d0c8;"></i><i style="left:507px;top:391px;width:127px;height:1px;background:#d4d0c8;"></i><i style="left:633px;top:375px;width:1px;height:17px;background:#d4d0c8;"></i><i style="left:506px;top:398px;width:129px;height:19px;background:#ffffff;"></i><i style="left:506px;top:398px;width:128px;height:1px;background:#808080;"></i><i style="left:506px;top:398px;width:1px;height:18px;background:#808080;"></i><i style="left:507px;top:399px;width:126px;height:1px;background:#d4d0c8;"></i><i style="left:507px;top:399px;width:1px;height:16px;background:#d4d0c8;"></i><i style="left:507px;top:415px;width:127px;height:1px;background:#d4d0c8;"></i><i style="left:633px;top:399px;width:1px;height:17px;background:#d4d0c8;"></i><s style="left:42px;top:378px;">Скачено, более чем, Мб</s><s style="left:42px;top:401px;">Отправлено, более чем, Мб</s><s style="left:402px;top:378px;">Но менее чем, Мб</s><s style="left:402px;top:401px;">Но менее чем, Мб</s><i style="left:30px;top:436px;width:788px;height:1px;background:#808080;"></i><i style="left:31px;top:437px;width:787px;height:1px;background:#ffffff;"></i><i style="left:30px;top:436px;width:1px;height:64px;background:#808080;"></i><i style="left:31px;top:437px;width:1px;height:63px;background:#ffffff;"></i><i style="left:30px;top:499px;width:788px;height:1px;background:#808080;"></i><i style="left:30px;top:500px;width:789px;height:1px;background:#ffffff;"></i><i style="left:817px;top:436px;width:1px;height:64px;background:#808080;"></i><i style="left:818px;top:436px;width:1px;height:65px;background:#ffffff;"></i><s style="left:37px;top:432px;background:#d4d0c8">Условия для работы правила за 1 час</s><i style="left:242px;top:449px;width:129px;height:19px;background:#ffffff;"></i><i style="left:242px;top:449px;width:128px;height:1px;background:#808080;"></i><i style="left:242px;top:449px;width:1px;height:18px;background:#808080;"></i><i style="left:243px;top:450px;width:126px;height:1px;background:#d4d0c8;"></i><i style="left:243px;top:450px;width:1px;height:16px;background:#d4d0c8;"></i><i style="left:243px;top:466px;width:127px;height:1px;background:#d4d0c8;"></i><i style="left:369px;top:450px;width:1px;height:17px;background:#d4d0c8;"></i><i style="left:242px;top:473px;width:129px;height:19px;background:#ffffff;"></i><i style="left:242px;top:473px;width:128px;height:1px;background:#808080;"></i><i style="left:242px;top:473px;width:1px;height:18px;background:#808080;"></i><i style="left:243px;top:474px;width:126px;height:1px;background:#d4d0c8;"></i><i style="left:243px;top:474px;width:1px;height:16px;background:#d4d0c8;"></i><i style="left:243px;top:490px;width:127px;height:1px;background:#d4d0c8;"></i><i style="left:369px;top:474px;width:1px;height:17px;background:#d4d0c8;"></i><i style="left:506px;top:449px;width:129px;height:19px;background:#ffffff;"></i><i style="left:506px;top:449px;width:128px;height:1px;background:#808080;"></i><i style="left:506px;top:449px;width:1px;height:18px;background:#808080;"></i><i style="left:507px;top:450px;width:126px;height:1px;background:#d4d0c8;"></i><i style="left:507px;top:450px;width:1px;height:16px;background:#d4d0c8;"></i><i style="left:507px;top:466px;width:127px;height:1px;background:#d4d0c8;"></i><i style="left:633px;top:450px;width:1px;height:17px;background:#d4d0c8;"></i><i style="left:506px;top:473px;width:129px;height:19px;background:#ffffff;"></i><i style="left:506px;top:473px;width:128px;height:1px;background:#808080;"></i><i style="left:506px;top:473px;width:1px;height:18px;background:#808080;"></i><i style="left:507px;top:474px;width:126px;height:1px;background:#d4d0c8;"></i><i style="left:507px;top:474px;width:1px;height:16px;background:#d4d0c8;"></i><i style="left:507px;top:490px;width:127px;height:1px;background:#d4d0c8;"></i><i style="left:633px;top:474px;width:1px;height:17px;background:#d4d0c8;"></i><s style="left:42px;top:453px;">Скачено, более чем, Мб</s><s style="left:42px;top:476px;">Отправлено, более чем, Мб</s><s style="left:402px;top:453px;">Но менее чем, Мб</s><s style="left:402px;top:476px;">Но менее чем, Мб</s><s style="left:332px;top:301px;width:300px;text-align:right;">2048</s><i style="left:30px;top:511px;width:788px;height:1px;background:#808080;"></i><i style="left:31px;top:512px;width:787px;height:1px;background:#ffffff;"></i><i style="left:30px;top:511px;width:1px;height:64px;background:#808080;"></i><i style="left:31px;top:512px;width:1px;height:63px;background:#ffffff;"></i><i style="left:30px;top:574px;width:788px;height:1px;background:#808080;"></i><i style="left:30px;top:575px;width:789px;height:1px;background:#ffffff;"></i><i style="left:817px;top:511px;width:1px;height:64px;background:#808080;"></i><i style="left:818px;top:511px;width:1px;height:65px;background:#ffffff;"></i><s style="left:37px;top:507px;background:#d4d0c8">Условия дополнительные</s><s style="left:42px;top:526px;">Время действия от</s><i style="left:242px;top:521px;width:129px;height:19px;background:#ffffff;"></i><i style="left:242px;top:521px;width:128px;height:1px;background:#808080;"></i><i style="left:242px;top:521px;width:1px;height:18px;background:#808080;"></i><i style="left:243px;top:522px;width:126px;height:1px;background:#d4d0c8;"></i><i style="left:243px;top:522px;width:1px;height:16px;background:#d4d0c8;"></i><i style="left:243px;top:538px;width:127px;height:1px;background:#d4d0c8;"></i><i style="left:369px;top:522px;width:1px;height:17px;background:#d4d0c8;"></i><s style="left:402px;top:526px;">Время действия до</s><i style="left:506px;top:521px;width:129px;height:19px;background:#ffffff;"></i><i style="left:506px;top:521px;width:128px;height:1px;background:#808080;"></i><i style="left:506px;top:521px;width:1px;height:18px;background:#808080;"></i><i style="left:507px;top:522px;width:126px;height:1px;background:#d4d0c8;"></i><i style="left:507px;top:522px;width:1px;height:16px;background:#d4d0c8;"></i><i style="left:507px;top:538px;width:127px;height:1px;background:#d4d0c8;"></i><i style="left:633px;top:522px;width:1px;height:17px;background:#d4d0c8;"></i><i style="left:42px;top:549px;width:13px;height:13px;background:#ffffff;"></i><i style="left:42px;top:549px;width:12px;height:1px;background:#808080;"></i><i style="left:42px;top:549px;width:1px;height:12px;background:#808080;"></i><i style="left:43px;top:550px;width:10px;height:1px;background:#d4d0c8;"></i><i style="left:43px;top:550px;width:1px;height:10px;background:#d4d0c8;"></i><i style="left:43px;top:560px;width:11px;height:1px;background:#d4d0c8;"></i><i style="left:53px;top:550px;width:1px;height:11px;background:#d4d0c8;"></i><svg style="position:absolute;left:45px;top:552px" width="7" height="7"><path d="M6 0h1v1h-1zM5 1h2v1h-2zM0 2h1v1h-1zM4 2h3v1h-3zM0 3h2v1h-2zM3 3h3v1h-3zM0 4h5v1h-5zM1 5h3v1h-3zM2 6h1v1h-1z" fill="#000"/></svg><s style="left:60px;top:550px;">Правило срабатывает только если положительный баланс</s><i style="left:26px;top:585px;width:792px;height:1px;background:#808080;"></i><i style="left:27px;top:586px;width:791px;height:1px;background:#ffffff;"></i><i style="left:26px;top:585px;width:1px;height:68px;background:#808080;"></i><i style="left:27px;top:586px;width:1px;height:67px;background:#ffffff;"></i><i style="left:26px;top:652px;width:792px;height:1px;background:#808080;"></i><i style="left:26px;top:653px;width:793px;height:1px;background:#ffffff;"></i><i style="left:817px;top:585px;width:1px;height:68px;background:#808080;"></i><i style="left:818px;top:585px;width:1px;height:69px;background:#ffffff;"></i><s style="left:34px;top:581px;background:#d4d0c8">Настройки скорости пользователей (шейпер)</s><s style="left:38px;top:604px;">Вх. макс. скорость , Кбит (CEIL_IN)</s><s style="left:38px;top:625px;">Вх. гарант. скорость , Кбит (RATE_IN)</s><i style="left:238px;top:601px;width:129px;height:19px;background:#ffffff;"></i><i style="left:238px;top:601px;width:128px;height:1px;background:#808080;"></i><i style="left:238px;top:601px;width:1px;height:18px;background:#808080;"></i><i style="left:239px;top:602px;width:126px;height:1px;background:#d4d0c8;"></i><i style="left:239px;top:602px;width:1px;height:16px;background:#d4d0c8;"></i><i style="left:239px;top:618px;width:127px;height:1px;background:#d4d0c8;"></i><i style="left:365px;top:602px;width:1px;height:17px;background:#d4d0c8;"></i><s style="left:64px;top:605px;width:300px;text-align:right;">2048</s><i style="left:238px;top:622px;width:129px;height:19px;background:#ffffff;"></i><i style="left:238px;top:622px;width:128px;height:1px;background:#808080;"></i><i style="left:238px;top:622px;width:1px;height:18px;background:#808080;"></i><i style="left:239px;top:623px;width:126px;height:1px;background:#d4d0c8;"></i><i style="left:239px;top:623px;width:1px;height:16px;background:#d4d0c8;"></i><i style="left:239px;top:639px;width:127px;height:1px;background:#d4d0c8;"></i><i style="left:365px;top:623px;width:1px;height:17px;background:#d4d0c8;"></i><s style="left:64px;top:626px;width:300px;text-align:right;">2048</s><s style="left:422px;top:607px;">Исх. макс. скорость , Кбит (CEIL_OUT)</s><s style="left:422px;top:628px;">Исх. гарант. скорость , Кбит (RATE_OUT)</s><i style="left:642px;top:601px;width:129px;height:19px;background:#ffffff;"></i><i style="left:642px;top:601px;width:128px;height:1px;background:#808080;"></i><i style="left:642px;top:601px;width:1px;height:18px;background:#808080;"></i><i style="left:643px;top:602px;width:126px;height:1px;background:#d4d0c8;"></i><i style="left:643px;top:602px;width:1px;height:16px;background:#d4d0c8;"></i><i style="left:643px;top:618px;width:127px;height:1px;background:#d4d0c8;"></i><i style="left:769px;top:602px;width:1px;height:17px;background:#d4d0c8;"></i><s style="left:468px;top:605px;width:300px;text-align:right;">2048</s><i style="left:642px;top:622px;width:129px;height:19px;background:#ffffff;"></i><i style="left:642px;top:622px;width:128px;height:1px;background:#808080;"></i><i style="left:642px;top:622px;width:1px;height:18px;background:#808080;"></i><i style="left:643px;top:623px;width:126px;height:1px;background:#d4d0c8;"></i><i style="left:643px;top:623px;width:1px;height:16px;background:#d4d0c8;"></i><i style="left:643px;top:639px;width:127px;height:1px;background:#d4d0c8;"></i><i style="left:769px;top:623px;width:1px;height:17px;background:#d4d0c8;"></i><s style="left:468px;top:626px;width:300px;text-align:right;">2048</s><i style="left:642px;top:662px;width:71px;height:19px;border:1px solid #003c74;border-radius:3px;background:linear-gradient(#ffffff,#f4f2ec 70%,#ece8df)"></i><i style="left:643px;top:663px;width:69px;height:17px;border:2px solid;border-color:#cee7ff #a8caf7 #6982ee #a8caf7;border-radius:2px;box-sizing:border-box;width:71px;height:19px;background:transparent"></i><s style="left:642px;top:667px;width:73px;text-align:center">OK</s><i style="left:734px;top:662px;width:71px;height:19px;border:1px solid #003c74;border-radius:3px;background:linear-gradient(#ffffff,#f4f2ec 70%,#ece8df)"></i><s style="left:734px;top:667px;width:73px;text-align:center">Отмена</s><svg style="position:absolute;left:686px;top:448px" width="14" height="22"><path d="M0.5 0.5V17.5L4.5 13.5L7.5 19.5L9.5 18.5L6.8 12.5H11.5Z" fill="#fff" stroke="#000" stroke-width="1"/></svg>
</body></html>
